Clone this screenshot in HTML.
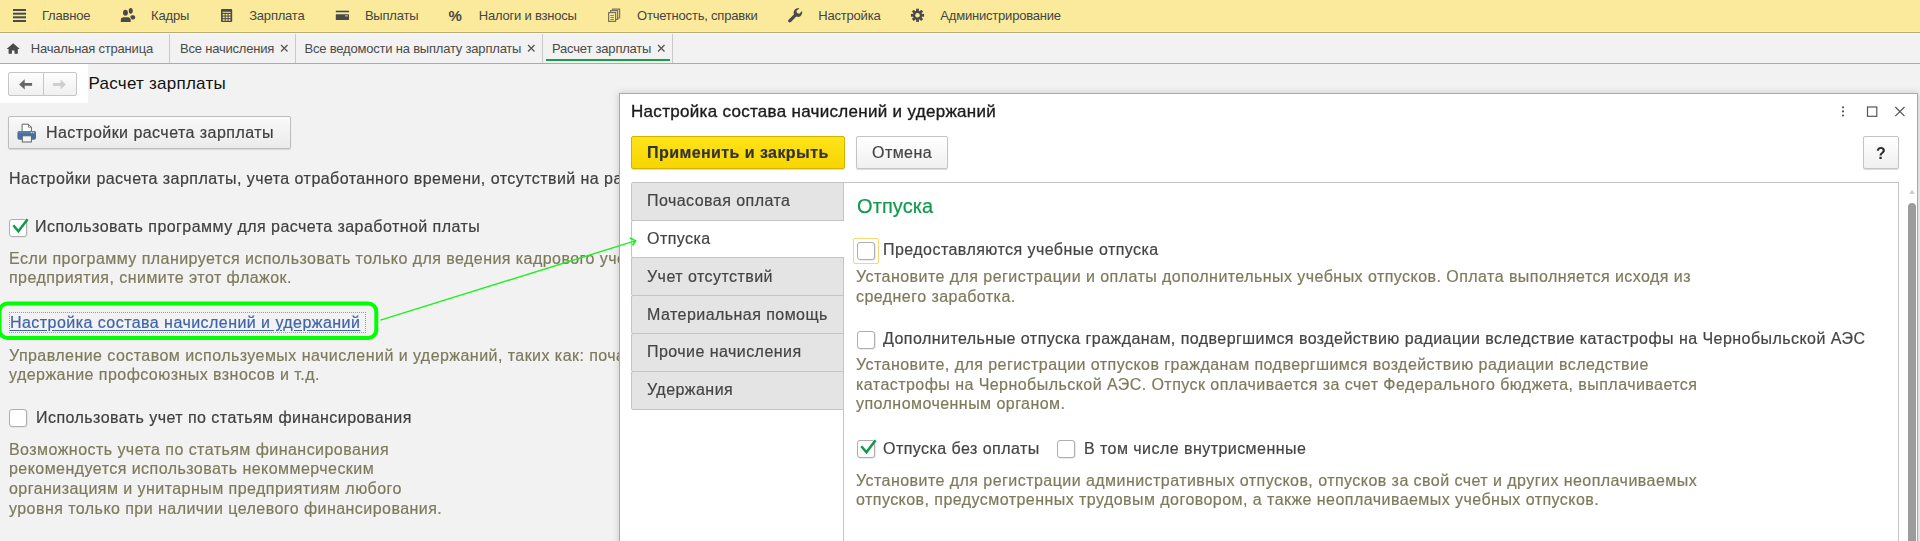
<!DOCTYPE html><html><head><meta charset="utf-8"><style>
*{box-sizing:border-box}
html,body{margin:0;padding:0}
body{width:1920px;height:541px;overflow:hidden;position:relative;background:#f2f2f2;font-family:"Liberation Sans",sans-serif}
.t{position:absolute;white-space:pre}
.g{will-change:transform;-webkit-text-stroke:0.2px currentColor}
.a{position:absolute}
.cb{position:absolute;width:18px;height:18px;border:1px solid #aeaeae;border-radius:3px;background:#fff;box-shadow:0.6px 0.6px 0 #dcdcdc}
</style></head><body>
<div class="a" style="left:0;top:0;width:1920px;height:32px;background:#fbea9c"></div>
<div class="a" style="left:0;top:31px;width:1920px;height:1px;background:#fcefa6"></div>
<div class="a" style="left:0;top:32px;width:1920px;height:1px;background:#b5ab70"></div>
<div class="a" style="left:0;top:33px;width:1920px;height:1px;background:#f8f8f8"></div>
<div class="t" style="left:42.0px;top:6.00px;font-size:13px;line-height:19px;color:#454545;letter-spacing:-0.2px;font-weight:400;">Главное</div>
<div class="t" style="left:151.1px;top:6.00px;font-size:13px;line-height:19px;color:#454545;letter-spacing:-0.2px;font-weight:400;">Кадры</div>
<div class="t" style="left:249.2px;top:6.00px;font-size:13px;line-height:19px;color:#454545;letter-spacing:-0.2px;font-weight:400;">Зарплата</div>
<div class="t" style="left:364.9px;top:6.00px;font-size:13px;line-height:19px;color:#454545;letter-spacing:-0.2px;font-weight:400;">Выплаты</div>
<div class="t" style="left:478.7px;top:6.00px;font-size:13px;line-height:19px;color:#454545;letter-spacing:-0.2px;font-weight:400;">Налоги и взносы</div>
<div class="t" style="left:637.0px;top:6.00px;font-size:13px;line-height:19px;color:#454545;letter-spacing:-0.2px;font-weight:400;">Отчетность, справки</div>
<div class="t" style="left:818.25px;top:6.00px;font-size:13px;line-height:19px;color:#454545;letter-spacing:-0.2px;font-weight:400;">Настройка</div>
<div class="t" style="left:940.3px;top:6.00px;font-size:13px;line-height:19px;color:#454545;letter-spacing:-0.2px;font-weight:400;">Администрирование</div>
<svg class="a" style="left:0;top:0" width="1000" height="32" viewBox="0 0 1000 32">
<g fill="#4a4a4a">
<rect x="13" y="9" width="13" height="2"/><rect x="13" y="12.7" width="13" height="2"/><rect x="13" y="16.3" width="13" height="2"/><rect x="13" y="20" width="13" height="2"/>
<ellipse cx="130.75" cy="10.8" rx="2.05" ry="2.9"/><rect x="130.2" y="15.3" width="5" height="4.3" rx="2"/>
<g stroke="#fbea9c" stroke-width="1.5" paint-order="stroke"><ellipse cx="125.45" cy="12.75" rx="2.45" ry="3.05"/><path d="M120.8 21.9 v-1.8 c0-1.8 1.2-2.8 2.8-2.8 h4.3 c1.6 0 2.8 1 2.8 2.8 v1.8z"/></g>
<rect x="221" y="9" width="11.2" height="13" rx="1"/>
<path d="M323 10 h0" />
<rect x="335.8" y="10.7" width="13.2" height="1.6"/><rect x="335.8" y="14.3" width="13.2" height="5.7" rx="0.6"/>
</g>
<g fill="#fbea9c"><rect x="222.5" y="11.8" width="8.2" height="1"/>
<rect x="222.7" y="14" width="2" height="1.5"/><rect x="225.6" y="14" width="2" height="1.5"/><rect x="228.5" y="14" width="2" height="1.5"/>
<rect x="222.7" y="16.6" width="2" height="1.5"/><rect x="225.6" y="16.6" width="2" height="1.5"/><rect x="228.5" y="16.6" width="2" height="1.5"/>
<rect x="222.7" y="19.2" width="2" height="1.5"/><rect x="225.6" y="19.2" width="2" height="1.5"/><rect x="228.5" y="19.2" width="2" height="1.5"/>
</g>
<rect x="345" y="15.2" width="3" height="1.3" fill="#b8b08a"/>
<text x="448.5" y="21" font-family="Liberation Sans" font-weight="700" font-size="15" fill="#4a4a4a">%</text>
<g fill="none" stroke="#77735e" stroke-width="1.2">
<rect x="608.6" y="12.6" width="7" height="8.8" fill="#fbea9c"/>
<path d="M610.6 12.6 v-2 h7 v8.8 h-2"/><path d="M612.6 10.6 v-1.4 h7 v8.8 h-2"/>
<path d="M610.4 15.5h3.5M610.4 17.5h3.5M610.4 19.5h3.5" stroke-width="0.9"/>
</g>
<path fill="#4a4a4a" d="M799.5 8.6 c-1.8 -0.6 -4 0 -5.1 1.6 c-0.9 1.3 -1 2.8 -0.4 4.1 l-5.4 5.4 c-0.7 0.7 -0.7 1.7 0 2.3 c0.6 0.6 1.6 0.6 2.3 0 l5.4 -5.4 c1.3 0.6 2.9 0.5 4.1 -0.4 c1.6 -1.1 2.2 -3.3 1.6 -5.1 l-2.6 2.6 l-2.4 -0.6 l-0.6 -2.4z"/>
<g transform="translate(917.5 15.3)" fill="#4a4a4a">
<circle r="4.5"/>
<g id="teeth"><rect x="-1.4" y="-6.6" width="2.8" height="13.2"/><rect x="-1.4" y="-6.6" width="2.8" height="13.2" transform="rotate(45)"/><rect x="-1.4" y="-6.6" width="2.8" height="13.2" transform="rotate(90)"/><rect x="-1.4" y="-6.6" width="2.8" height="13.2" transform="rotate(135)"/></g>
<circle r="2.3" fill="#fbea9c"/>
</g>
</svg>
<div class="a" style="left:169px;top:34px;width:1px;height:29px;background:#c9c9c9"></div>
<div class="a" style="left:295px;top:34px;width:1px;height:29px;background:#c9c9c9"></div>
<div class="a" style="left:542px;top:34px;width:1px;height:29px;background:#c9c9c9"></div>
<div class="a" style="left:672px;top:34px;width:1px;height:29px;background:#c9c9c9"></div>
<div class="a" style="left:0;top:63px;width:1920px;height:1px;background:#ababab"></div>
<div class="t" style="left:30.75px;top:39.20px;font-size:13px;line-height:19px;color:#4a4a4a;letter-spacing:-0.2px;font-weight:400;">Начальная страница</div>
<div class="t" style="left:180.0px;top:39.20px;font-size:13px;line-height:19px;color:#4a4a4a;letter-spacing:-0.2px;font-weight:400;">Все начисления</div>
<div class="t" style="left:304.5px;top:39.20px;font-size:13px;line-height:19px;color:#4a4a4a;letter-spacing:-0.2px;font-weight:400;">Все ведомости на выплату зарплаты</div>
<div class="t" style="left:552.0px;top:39.20px;font-size:13px;line-height:19px;color:#4a4a4a;letter-spacing:-0.2px;font-weight:400;">Расчет зарплаты</div>
<div class="a" style="left:546px;top:59px;width:124px;height:2px;background:#1c9d4a"></div>
<svg class="a" style="left:0;top:34px" width="700" height="29" viewBox="0 34 700 29">
<path fill="#4a4a4a" d="M13.2 43.3 l-6.6 5.6 h2 v4.9 h3.3 v-3.2 h2.6 v3.2 h3.3 v-4.9 h2z"/>
<g stroke="#555" stroke-width="1.3" fill="none">
<path d="M281 45 l6.5 6.5 M287.5 45 l-6.5 6.5"/>
<path d="M528 45 l6.5 6.5 M534.5 45 l-6.5 6.5"/>
<path d="M658 45 l6.5 6.5 M664.5 45 l-6.5 6.5"/>
</g></svg>
<div class="a" style="left:0;top:64px;width:88px;height:39px;background:#fff"></div>
<div class="a" style="left:8px;top:72px;width:69px;height:24px;border:1px solid #c6c6c6;border-radius:2px;background:linear-gradient(#fdfdfd,#f0f0f0)"></div>
<div class="a" style="left:43px;top:73px;width:1px;height:22px;background:#c6c6c6"></div>
<svg class="a" style="left:0;top:64px" width="88" height="39" viewBox="0 64 88 39">
<path fill="#666" d="M19.1 84.4 l5.6 -5.2 v3.8 h7.4 v2.8 h-7.4 v3.8z"/>
<path fill="#cfcfcf" d="M65.9 84.4 l-5.4 -4.8 v3.5 h-7.6 v2.8 h7.6 v3.5z"/>
</svg>
<div class="t" style="left:88.5px;top:71.75px;font-size:17px;line-height:23px;color:#111;letter-spacing:0.25px;font-weight:400;">Расчет зарплаты</div>
<div class="a" style="left:8px;top:116px;width:283px;height:33px;border:1px solid #bdbdbd;border-radius:2px;background:linear-gradient(#f9f9f9,#ebebeb);box-shadow:0 1px 1px rgba(0,0,0,0.12)"></div>
<svg class="a" style="left:14px;top:120px" width="26" height="26" viewBox="14 120 26 26">
<path fill="#fff" stroke="#5f6468" stroke-width="1" d="M22.1 124.2 h6.3 l3 3 v4.5 h-9.3z"/>
<path fill="none" stroke="#5f6468" stroke-width="0.8" d="M28.4 124.2 v3 h3"/>
<rect x="17.4" y="130.9" width="18.6" height="8.8" rx="2" fill="#4a6f9e"/>
<rect x="17.8" y="131.3" width="17.8" height="2" rx="1" fill="#5a80ad"/>
<rect x="22.3" y="135.8" width="9.1" height="6.2" fill="#f4f4f4" stroke="#5f6468" stroke-width="1"/>
<rect x="30.8" y="132" width="1.3" height="1.2" fill="#c9d5e3"/><rect x="32.7" y="132" width="1.3" height="1.2" fill="#c9d5e3"/>
</svg>
<div class="t g" style="left:46px;top:122.10px;font-size:16px;line-height:22px;color:#404040;letter-spacing:0.45px;font-weight:400;">Настройки расчета зарплаты</div>
<div class="t g" style="left:9.2px;top:168.00px;font-size:16px;line-height:22px;color:#404040;letter-spacing:0.45px;font-weight:400;">Настройки расчета зарплаты, учета отработанного времени, отсутствий на расчет</div>
<div class="cb" style="left:9px;top:219px;width:18px;height:18px;background:#fff"></div>
<div class="t g" style="left:35.2px;top:216.20px;font-size:16px;line-height:22px;color:#404040;letter-spacing:0.45px;font-weight:400;">Использовать программу для расчета заработной платы</div>
<div class="t g" style="left:9.1px;top:247.60px;font-size:16px;line-height:22px;color:#7e7a5c;letter-spacing:0.45px;font-weight:400;">Если программу планируется использовать только для ведения кадрового учета</div>
<div class="t g" style="left:9.1px;top:267.25px;font-size:16px;line-height:22px;color:#7e7a5c;letter-spacing:0.45px;font-weight:400;">предприятия, снимите этот флажок.</div>
<div class="a" style="left:9px;top:312px;width:357px;height:21px;border:1px dotted #9a9a9a"></div>
<div class="t g" style="left:9.7px;top:311.50px;font-size:16px;line-height:22px;color:#3d64ad;letter-spacing:0.45px;font-weight:400;text-decoration:underline;text-underline-offset:2px">Настройка состава начислений и удержаний</div>
<div class="t g" style="left:9.1px;top:344.50px;font-size:16px;line-height:22px;color:#7e7a5c;letter-spacing:0.45px;font-weight:400;">Управление составом используемых начислений и удержаний, таких как: почасовая</div>
<div class="t g" style="left:9.1px;top:364.20px;font-size:16px;line-height:22px;color:#7e7a5c;letter-spacing:0.45px;font-weight:400;">удержание профсоюзных взносов и т.д.</div>
<div class="cb" style="left:9px;top:409px"></div>
<div class="t g" style="left:35.5px;top:406.80px;font-size:16px;line-height:22px;color:#404040;letter-spacing:0.45px;font-weight:400;">Использовать учет по статьям финансирования</div>
<div class="t g" style="left:9.1px;top:438.80px;font-size:16px;line-height:22px;color:#7e7a5c;letter-spacing:0.45px;font-weight:400;">Возможность учета по статьям финансирования</div>
<div class="t g" style="left:9.1px;top:458.45px;font-size:16px;line-height:22px;color:#7e7a5c;letter-spacing:0.45px;font-weight:400;">рекомендуется использовать некоммерческим</div>
<div class="t g" style="left:9.1px;top:478.10px;font-size:16px;line-height:22px;color:#7e7a5c;letter-spacing:0.45px;font-weight:400;">организациям и унитарным предприятиям любого</div>
<div class="t g" style="left:9.1px;top:497.75px;font-size:16px;line-height:22px;color:#7e7a5c;letter-spacing:0.45px;font-weight:400;">уровня только при наличии целевого финансирования.</div>
<div class="a" style="left:619px;top:93px;width:1299px;height:460px;background:#fff;border:1px solid #a9a9a9;box-shadow:0 0 7px rgba(0,0,0,0.18)"></div>
<div class="t g" style="left:631.25px;top:100.20px;font-size:17px;line-height:23px;color:#1a1a1a;letter-spacing:0.3px;font-weight:400;-webkit-text-stroke:0.35px #1a1a1a">Настройка состава начислений и удержаний</div>
<svg class="a" style="left:1830px;top:100px" width="85" height="24" viewBox="1830 100 85 24">
<g fill="#555"><circle cx="1843" cy="107.3" r="1.1"/><circle cx="1843" cy="111.4" r="1.1"/><circle cx="1843" cy="115.5" r="1.1"/></g>
<rect x="1867.5" y="107" width="9.3" height="9.3" fill="none" stroke="#555" stroke-width="1.2"/>
<path d="M1895.3 107 l9.2 9.2 M1904.5 107 l-9.2 9.2" stroke="#555" stroke-width="1.2"/>
</svg>
<div class="a" style="left:631px;top:136px;width:214px;height:33px;border:1px solid #d2b400;border-radius:2px;background:linear-gradient(#ffe31a,#f7d600);box-shadow:0 1px 1px rgba(0,0,0,0.15)"></div>
<div class="t g" style="left:647.4px;top:142.10px;font-size:16px;line-height:22px;color:#333;letter-spacing:0.43px;font-weight:700;">Применить и закрыть</div>
<div class="a" style="left:856px;top:136px;width:92px;height:33px;border:1px solid #c4c4c4;border-radius:2px;background:linear-gradient(#fff,#f0f0f0);box-shadow:0 1px 1px rgba(0,0,0,0.15)"></div>
<div class="t g" style="left:872.3px;top:142.10px;font-size:16px;line-height:22px;color:#444;letter-spacing:0.45px;font-weight:400;">Отмена</div>
<div class="a" style="left:1863px;top:136px;width:36px;height:33px;border:1px solid #c4c4c4;border-radius:2px;background:linear-gradient(#fff,#f0f0f0);box-shadow:0 1px 1px rgba(0,0,0,0.15)"></div>
<div class="t g" style="left:1876px;top:142.50px;font-size:16px;line-height:22px;color:#2a2a2a;letter-spacing:0px;font-weight:700;-webkit-text-stroke:0">?</div>
<div class="a" style="left:843px;top:182px;width:1056px;height:400px;border:1px solid #c4c4c4;background:#fff"></div>
<div class="a" style="left:631px;top:182px;width:213px;height:39px;border:1px solid #c4c4c4;background:#e4e4e4;border-radius:2px 0 0 2px;"></div>
<div class="t g" style="left:647px;top:190.20px;font-size:16px;line-height:22px;color:#444;letter-spacing:0.45px;font-weight:400;">Почасовая оплата</div>
<div class="a" style="left:631px;top:220px;width:213px;height:38px;border:1px solid #c4c4c4;border-right:none;background:#fff;border-radius:2px 0 0 2px;"></div>
<div class="t g" style="left:647px;top:228.00px;font-size:16px;line-height:22px;color:#444;letter-spacing:0.45px;font-weight:400;">Отпуска</div>
<div class="a" style="left:631px;top:257px;width:213px;height:39px;border:1px solid #c4c4c4;background:#e4e4e4;border-radius:2px 0 0 2px;"></div>
<div class="t g" style="left:647px;top:265.80px;font-size:16px;line-height:22px;color:#444;letter-spacing:0.45px;font-weight:400;">Учет отсутствий</div>
<div class="a" style="left:631px;top:295px;width:213px;height:39px;border:1px solid #c4c4c4;background:#e4e4e4;border-radius:2px 0 0 2px;"></div>
<div class="t g" style="left:647px;top:303.60px;font-size:16px;line-height:22px;color:#444;letter-spacing:0.45px;font-weight:400;">Материальная помощь</div>
<div class="a" style="left:631px;top:333px;width:213px;height:39px;border:1px solid #c4c4c4;background:#e4e4e4;border-radius:2px 0 0 2px;"></div>
<div class="t g" style="left:647px;top:341.40px;font-size:16px;line-height:22px;color:#444;letter-spacing:0.45px;font-weight:400;">Прочие начисления</div>
<div class="a" style="left:631px;top:371px;width:213px;height:39px;border:1px solid #c4c4c4;background:#e4e4e4;border-radius:2px 0 0 2px;"></div>
<div class="t g" style="left:647px;top:379.20px;font-size:16px;line-height:22px;color:#444;letter-spacing:0.45px;font-weight:400;">Удержания</div>
<svg class="a" style="left:1905px;top:186px" width="14" height="355" viewBox="1905 186 14 355"><path d="M1909.2 193.7 l2.8 -3.9 l2.8 3.9z" fill="#c8c8c8"/><rect x="1908" y="203" width="8" height="400" rx="4" fill="#9c9c9c"/></svg>
<div class="t g" style="left:856.5px;top:192.60px;font-size:20px;line-height:26px;color:#0f9a4c;letter-spacing:0.1px;font-weight:400;">Отпуска</div>
<div class="a" style="left:853px;top:238px;width:26px;height:26px;border:1.5px solid #f7d774;border-radius:2px"></div>
<div class="cb" style="left:857px;top:242px"></div>
<div class="t g" style="left:883.3px;top:239.00px;font-size:16px;line-height:22px;color:#444;letter-spacing:0.45px;font-weight:400;">Предоставляются учебные отпуска</div>
<div class="t g" style="left:856.2px;top:266.00px;font-size:16px;line-height:22px;color:#7e7a5c;letter-spacing:0.45px;font-weight:400;">Установите для регистрации и оплаты дополнительных учебных отпусков. Оплата выполняется исходя из</div>
<div class="t g" style="left:856.2px;top:285.70px;font-size:16px;line-height:22px;color:#7e7a5c;letter-spacing:0.45px;font-weight:400;">среднего заработка.</div>
<div class="cb" style="left:857px;top:331px"></div>
<div class="t g" style="left:882.8px;top:328.20px;font-size:16px;line-height:22px;color:#444;letter-spacing:0.45px;font-weight:400;">Дополнительные отпуска гражданам, подвергшимся воздействию радиации вследствие катастрофы на Чернобыльской АЭС</div>
<div class="t g" style="left:856.2px;top:354.00px;font-size:16px;line-height:22px;color:#7e7a5c;letter-spacing:0.45px;font-weight:400;">Установите, для регистрации отпусков гражданам подвергшимся воздействию радиации вследствие</div>
<div class="t g" style="left:856.2px;top:373.70px;font-size:16px;line-height:22px;color:#7e7a5c;letter-spacing:0.45px;font-weight:400;">катастрофы на Чернобыльской АЭС. Отпуск оплачивается за счет Федерального бюджета, выплачивается</div>
<div class="t g" style="left:856.2px;top:393.40px;font-size:16px;line-height:22px;color:#7e7a5c;letter-spacing:0.45px;font-weight:400;">уполномоченным органом.</div>
<div class="cb" style="left:857px;top:440px"></div>
<div class="t g" style="left:883.3px;top:438.00px;font-size:16px;line-height:22px;color:#444;letter-spacing:0.45px;font-weight:400;">Отпуска без оплаты</div>
<div class="cb" style="left:1057px;top:440px"></div>
<div class="t g" style="left:1084px;top:438.00px;font-size:16px;line-height:22px;color:#444;letter-spacing:0.45px;font-weight:400;">В том числе внутрисменные</div>
<div class="t g" style="left:856.2px;top:469.50px;font-size:16px;line-height:22px;color:#7e7a5c;letter-spacing:0.45px;font-weight:400;">Установите для регистрации административных отпусков, отпусков за свой счет и других неоплачиваемых</div>
<div class="t g" style="left:856.2px;top:489.20px;font-size:16px;line-height:22px;color:#7e7a5c;letter-spacing:0.45px;font-weight:400;">отпусков, предусмотренных трудовым договором, а также неоплачиваемых учебных отпусков.</div>
<svg class="a" style="left:9px;top:218px" width="22" height="22" viewBox="0 0 22 22"><path d="M4.3 7.3 L9.4 13.2 L18.6 1.2" fill="none" stroke="#11994a" stroke-width="2.5" stroke-linejoin="miter" stroke-linecap="butt"/></svg>
<svg class="a" style="left:857px;top:439px" width="22" height="22" viewBox="0 0 22 22"><path d="M4.3 7.3 L9.4 13.2 L18.6 1.2" fill="none" stroke="#11994a" stroke-width="2.5" stroke-linejoin="miter" stroke-linecap="butt"/></svg>
<svg class="a" style="left:0;top:0" width="1920" height="541" viewBox="0 0 1920 541">
<rect x="-0.5" y="303.5" width="376.8" height="34.4" rx="8" fill="none" stroke="#00ff00" stroke-width="4"/>
<path d="M380.4 320.2 L635 240.9" stroke="#1cf21c" stroke-width="1.4" fill="none"/>
<path d="M629.9 238.1 L635.5 240.8 L632.5 245.5" stroke="#1cf21c" stroke-width="1.7" fill="none" stroke-linejoin="miter"/>
</svg>
</body></html>
